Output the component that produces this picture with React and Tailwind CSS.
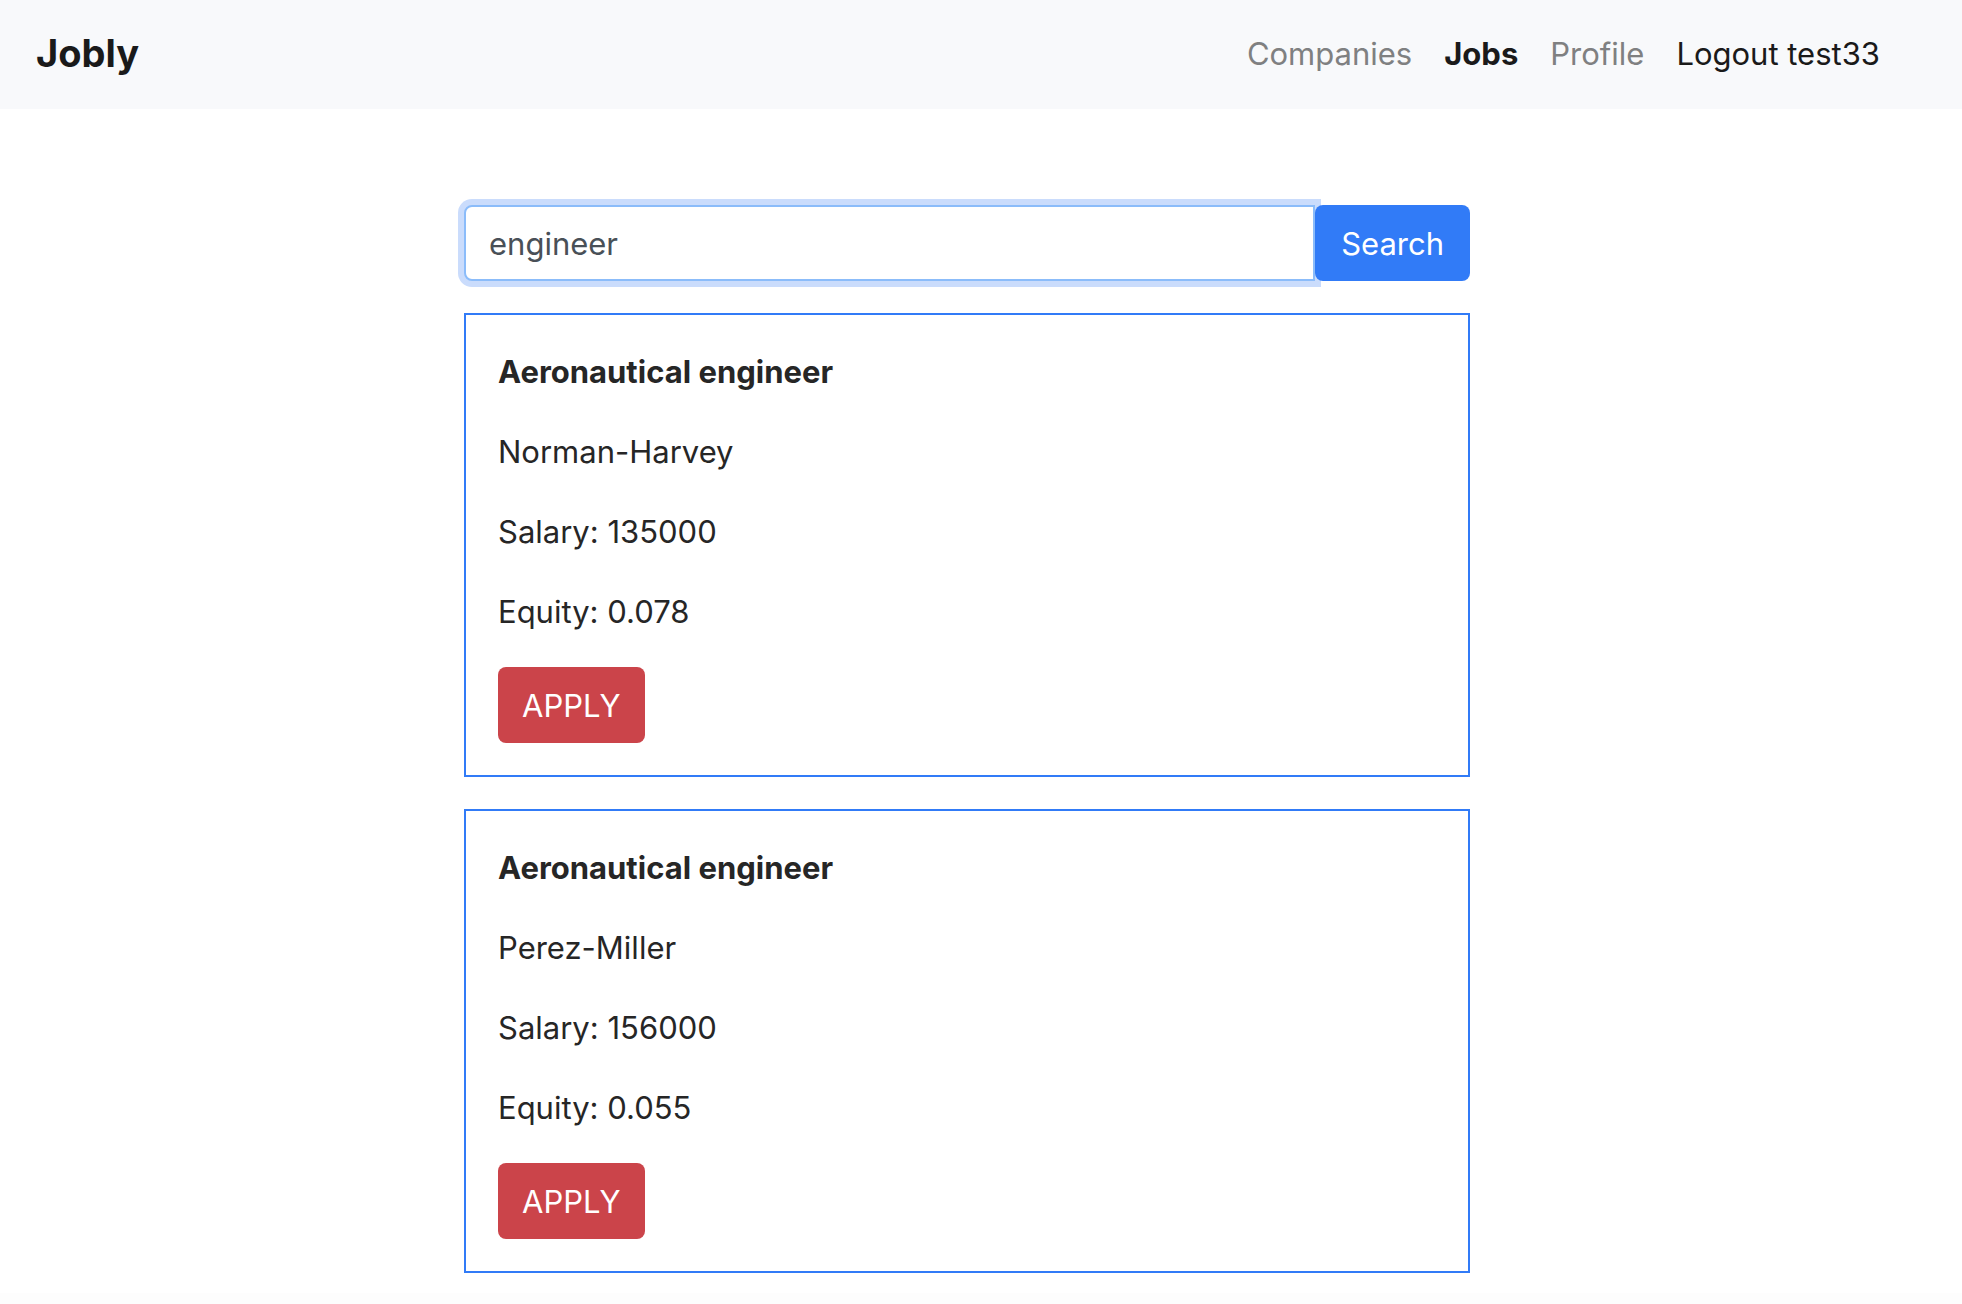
const jobs = [
  { id: 1, title: "Aeronautical engineer", company: "Norman-Harvey", salary: 135000, equity: "0.078" },
  { id: 2, title: "Aeronautical engineer", company: "Perez-Miller", salary: 156000, equity: "0.055" },
];

function NavBar() {
  return (
    <header className="flex items-start justify-between bg-[#f8f9fb] pt-6 pb-[25px] pl-9 pr-[82px] text-[#1a1a1a]">
      <a href="#home" className="text-[38px] leading-[58px] font-bold">Jobly</a>
      <nav className="flex items-center gap-8 text-[31px] leading-[60px]">
        <a href="#companies" className="text-[#7f8081]">Companies</a>
        <a href="#jobs" className="font-bold" aria-current="page">Jobs</a>
        <a href="#profile" className="text-[#7f8081]">Profile</a>
        <a href="#logout">Logout test33</a>
      </nav>
    </header>
  );
}

function SearchForm() {
  return (
    <form className="flex h-[76px]" onSubmit={(e) => e.preventDefault()}>
      <input
        type="text"
        aria-label="Search jobs"
        defaultValue="engineer"
        className="min-w-0 flex-1 rounded-l-lg border-2 border-[#8bbcfa] bg-white px-[23px] pt-0.5 text-[#495057] outline-none ring-6 ring-[#cadcfc]"
      />
      <button type="submit" className="relative rounded-lg bg-[#317bf7] px-[26px] pt-0.5 text-white">
        Search
      </button>
    </form>
  );
}

function JobCard({ job }) {
  return (
    <article className="flex flex-col items-start gap-[30px] border-2 border-[#317bf7] p-8">
      <h2 className="font-bold">{job.title}</h2>
      <p>{job.company}</p>
      <p>Salary: {job.salary}</p>
      <p>Equity: {job.equity}</p>
      <button type="button" className="h-[76px] rounded-lg bg-[#cb444a] px-6 pt-0.5 text-white">
        APPLY
      </button>
    </article>
  );
}

export default function App() {
  return (
    <div className="flex min-h-screen flex-col bg-white font-['Inter',sans-serif] text-[#262626]">
      <NavBar />
      <main className="pt-24 pr-7 pb-5">
        <div className="mx-auto flex w-full max-w-[1006px] flex-col gap-8 text-[31px] leading-[50px]">
          <SearchForm />
          {jobs.map((job) => (
            <JobCard key={job.id} job={job} />
          ))}
        </div>
      </main>
      <footer className="flex-1 bg-[#fdfdfd]" />
    </div>
  );
}
